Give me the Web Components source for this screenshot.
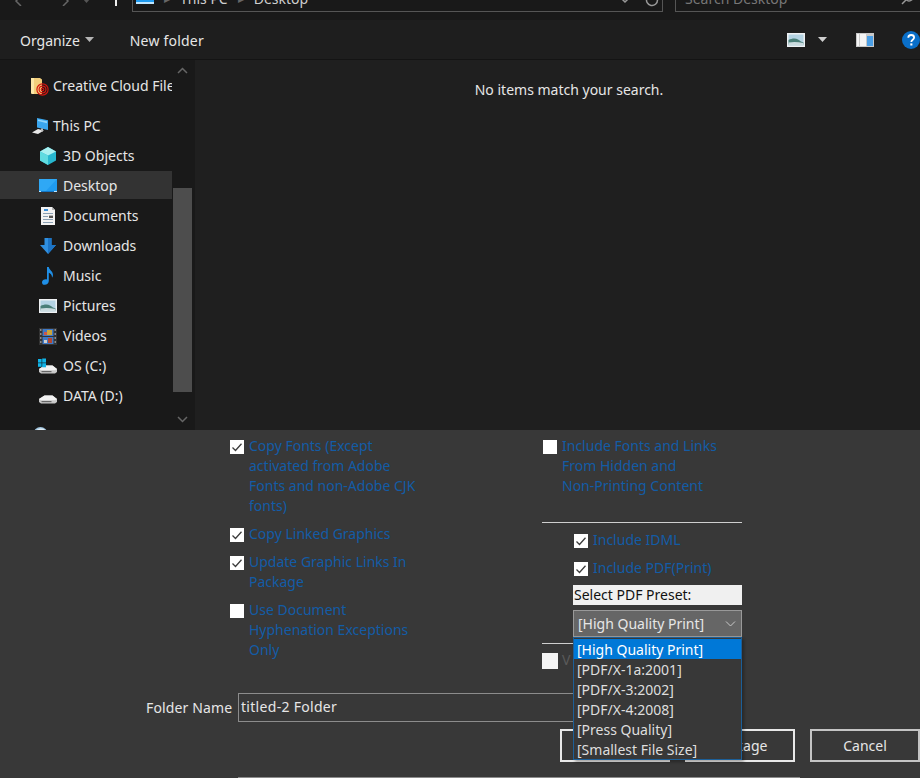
<!DOCTYPE html>
<html>
<head>
<meta charset="utf-8">
<style>
  html, body { margin: 0; padding: 0; background: #383838; }
  body { font: 14px/20px "Noto Sans", "Open Sans", sans-serif; color: #e6e6e6; width: 920px; height: 778px; overflow: hidden; }
</style>
</head>
<body>
<save-dialog>
  <title-strip></title-strip>
  <tool-strip></tool-strip>
  <div class="browser" slot="browser">
    <nav-tree>
      <nav-item icon="cc" group>Creative Cloud Files</nav-item>
      <nav-item icon="pc" group>This PC</nav-item>
      <nav-item icon="cube">3D Objects</nav-item>
      <nav-item icon="desktop" selected>Desktop</nav-item>
      <nav-item icon="doc">Documents</nav-item>
      <nav-item icon="down">Downloads</nav-item>
      <nav-item icon="music">Music</nav-item>
      <nav-item icon="pic">Pictures</nav-item>
      <nav-item icon="video">Videos</nav-item>
      <nav-item icon="osdrive">OS (C:)</nav-item>
      <nav-item icon="drive">DATA (D:)</nav-item>
      <nav-item icon="globe" group></nav-item>
    </nav-tree>
    <file-pane>No items match your search.</file-pane>
  </div>
  <package-panel>
    <option-col slot="left">
      <check-row checked>Copy Fonts (Except<br>activated from Adobe<br>Fonts and non-Adobe CJK<br>fonts)</check-row>
      <check-row checked>Copy Linked Graphics</check-row>
      <check-row checked>Update Graphic Links In<br>Package</check-row>
      <check-row>Use Document<br>Hyphenation Exceptions<br>Only</check-row>
    </option-col>
    <option-col slot="right">
      <check-row style="margin-left:1px">Include Fonts and Links<br>From Hidden and<br>Non-Printing Content</check-row>
      <rule-line style="margin-top:26px"></rule-line>
      <check-row checked style="margin:7px 0 0 32px">Include IDML</check-row>
      <check-row checked style="margin:8px 0 0 32px">Include PDF(Print)</check-row>
      <preset-select label="Select PDF Preset:" value="[High Quality Print]"></preset-select>
      <rule-line style="margin-top:6px"></rule-line>
      <check-row disabled style="margin-top:6px">V</check-row>
    </option-col>
    <folder-field slot="folder" label="Folder Name" value="titled-2 Folder"></folder-field>
    <dlg-button slot="buttons"></dlg-button>
    <dlg-button slot="buttons">Package</dlg-button>
    <dlg-button slot="buttons">Cancel</dlg-button>
  </package-panel>
</save-dialog>

<script>
(function() {
  // icons are all drawn on an 18x18 box
  const drive = `
    <path d="M0 12 5.500 8.500h8L18 12v3l-2 1.500H2L0 15z" fill="#c9c9c9"/>
    <path d="M0 12 5.500 8.500h8L18 12l-2 1.300H2z" fill="#f2f2f2"/>
    <rect x="2.500" y="14" width="10" height="1.200" fill="#666"/>`;
  const ICONS = {
    cc: `<path d="M0 1h9l2 1.500V17H1l-1-1z" fill="#f2cf7c"/><path d="M0 1h3v16H1l-1-1z" fill="#fbe7a8"/>
      <g fill="none" stroke="#d3160f" stroke-width="1.200"><circle cx="11.500" cy="12.500" r="5.600"/><circle cx="11.500" cy="12.500" r="3.400"/><circle cx="11.500" cy="12.500" r="1.300"/></g>`,
    pc: `<path d="M6 1l11 2.200V13L6 10.500z" fill="#3aa6ee"/><path d="M7 2.400 16 4.200v2L7 4z" fill="#8fd4fb"/>
      <path d="M1 15.500 7 12l6 1.500-6 3.500z" fill="#e8e8e8"/><path d="M10 11.500h2v3h-2z" fill="#bdbdbd"/>`,
    cube: `<path d="M9 0l8 4.400v9.200L9 18 1 13.600V4.400z" fill="#27b7cf"/><path d="M9 0l8 4.400L9 8.600 1 4.400z" fill="#a9f0f0"/>
      <path d="M1 4.400 9 8.600V18l-8-4.400z" fill="#5fdbe0"/>`,
    desktop: `<rect x="0" y="2" width="18" height="13" fill="#1f9bf0"/><path d="M0 2h18L6 15H0z" fill="#2fa8f5"/>
      <rect x="0" y="14" width="18" height="1" fill="#bfe6ff"/><rect x="2" y="14" width="13" height="1" fill="#1478c8"/>`,
    doc: `<path d="M2 0h11l3 3v15H2z" fill="#f3f3f3"/><path d="M13 0l3 3h-3z" fill="#b5b5b5"/>
      <g fill="#8aa0b4"><rect x="4" y="6" width="10" height="1"/><rect x="4" y="9" width="5" height="1"/><rect x="4" y="12" width="10" height="1"/><rect x="4" y="15" width="10" height="1"/></g>
      <rect x="5" y="2" width="4" height="2" fill="#3b8fd8"/><rect x="10" y="8.600" width="4" height="2.400" fill="#555"/>`,
    down: `<path d="M5.500 1h7v7H17l-8 9-8-9h4.500z" fill="#2f8fe0"/><path d="M9 1h3.500v7H17l-8 9z" fill="#1c74c6"/>`,
    music: `<path d="M8 0h1.800c.3 3 4.200 4 4.200 8 0 1-.4 2-1 2.800.3-3-2-4.500-3.200-5V14c0 2.200-2 3.800-4 3.800S3 16.800 3 15.200c0-2 2.500-3.400 5-2.800z" fill="#1f8fe6"/>`,
    pic: `<rect x="0" y="2" width="18" height="14" fill="#eef1f3"/><rect x="1.500" y="3.500" width="15" height="11" fill="#b4d3e3"/>
      <path d="M1.500 9c3-1.500 7-2 9.500-.5s3.500 2.500 5.500 3v2h-15z" fill="#4a7f78"/><path d="M1.500 11.500c5-1 10-.5 15 .5v2.500h-15z" fill="#cbdbdf"/>`,
    video: `<rect x="0" y="1" width="18" height="17" fill="#333"/>
      <rect x="3.500" y="2" width="11" height="7" fill="#3f79c6"/><rect x="3.500" y="10" width="11" height="7" fill="#3f79c6"/>
      <rect x="8" y="3" width="5" height="5" fill="#c9a33a"/><rect x="9" y="11" width="4" height="5" fill="#b3472f"/><rect x="5" y="5" width="3" height="3" fill="#c9574c"/><rect x="5" y="13" width="3" height="3" fill="#cfcfcf"/>
      <g fill="#8a8a8a"><rect x="1" y="2" width="1.500" height="2"/><rect x="1" y="6" width="1.500" height="2"/><rect x="1" y="10" width="1.500" height="2"/><rect x="1" y="14" width="1.500" height="2"/><rect x="15.500" y="2" width="1.500" height="2"/><rect x="15.500" y="6" width="1.500" height="2"/><rect x="15.500" y="10" width="1.500" height="2"/><rect x="15.500" y="14" width="1.500" height="2"/></g>`,
    osdrive: `${drive}<g fill="#10b4e8"><rect x="-1" y="2" width="3.600" height="3.600"/><rect x="3.200" y="1.500" width="3.800" height="4.100"/><rect x="-1" y="6.200" width="3.600" height="3.600"/><rect x="3.200" y="6.200" width="3.800" height="4.100"/></g>`,
    drive: drive,
    globe: `<circle cx="9.500" cy="7" r="7" fill="#9ec3dd"/><path d="M5 3.500c2-2 6-3 9-.5l-4 2z" fill="#e3eef5"/>`
  };

  const itemTemplate = document.createElement("template");
  itemTemplate.innerHTML = `
    <style>
      :host { display: flex; flex: none; align-items: center; height: 28px; box-sizing: border-box; margin-top: 2px; padding-left: 39px; white-space: nowrap; overflow: hidden; color: #e6e6e6; }
      :host([group]) { margin-top: 12px; padding-left: 31px; }
      :host([selected]) { background: #333; margin: 1px 0; padding-top: 2px; }
      svg { flex: none; width: 18px; height: 18px; margin-right: 6px; overflow: visible; }
      :host([group]) svg { margin-right: 4px; }
      :host([selected]) svg { margin-top: -1px; }
    </style>
    <svg viewBox="0 0 18 18"></svg><slot></slot>
  `;
  class NavItem extends HTMLElement {
    constructor() {
      super();
      this.attachShadow({ mode: "open" });
      this.shadowRoot.appendChild(itemTemplate.content.cloneNode(true));
    }
    connectedCallback() {
      this.shadowRoot.querySelector("svg").innerHTML = ICONS[this.getAttribute("icon")] || "";
    }
  }

  const treeTemplate = document.createElement("template");
  treeTemplate.innerHTML = `
    <style>
      :host { display: flex; flex: none; width: 195px; background: #191919; overflow: hidden; }
      .list { width: 172px; flex: none; display: flex; flex-direction: column; }
      .bar { width: 19px; margin: 0 2px 0 1px; flex: none; display: flex; flex-direction: column; align-items: center; height: 371px; }
      .thumb { width: 19px; height: 204px; background: #4d4d4d; margin-top: 114px; flex: none; }
      svg { width: 11px; height: 7px; margin-top: 7px; flex: none; }
      svg.dn { margin-top: 24px; }
    </style>
    <div class="list"><slot></slot></div>
    <div class="bar">
      <svg viewBox="0 0 11 7"><path d="M1 6l4.500-4.500L10 6" fill="none" stroke="#666" stroke-width="1.500"/></svg>
      <div class="thumb"></div>
      <svg class="dn" viewBox="0 0 11 7"><path d="M1 1l4.500 4.500L10 1" fill="none" stroke="#666" stroke-width="1.500"/></svg>
    </div>
  `;
  class NavTree extends HTMLElement {
    constructor() {
      super();
      this.attachShadow({ mode: "open" });
      this.shadowRoot.appendChild(treeTemplate.content.cloneNode(true));
    }
  }

  const paneTemplate = document.createElement("template");
  paneTemplate.innerHTML = `
    <style>
      :host { display: block; flex: 1; background: #1f1f1f; color: #e6e6e6; text-align: center; padding: 20px 0 0 23px; }
    </style>
    <slot></slot>
  `;
  class FilePane extends HTMLElement {
    constructor() {
      super();
      this.attachShadow({ mode: "open" });
      this.shadowRoot.appendChild(paneTemplate.content.cloneNode(true));
    }
  }

  const titleTemplate = document.createElement("template");
  titleTemplate.innerHTML = `
    <style>
      :host { display: flex; align-items: flex-end; height: 20px; padding-bottom: 8px; box-sizing: border-box; overflow: hidden; background: #191919; color: #b8b8b8; }
      .nav { display: flex; align-items: flex-end; width: 132px; height: 12px; flex: none; }
      .nav svg { flex: none; }
      .tick { width: 2px; height: 6px; background: #eee; align-self: flex-start; margin-left: 24px; }
      .box { display: flex; align-items: flex-end; height: 28px; border: 1px solid #555; box-sizing: border-box; flex: none; padding-bottom: 2px; }
      .addr { width: 531px; padding-left: 3px; margin-right: 12px; }
      .search { width: 260px; padding-left: 9px; color: #777; }
      .sep { margin: 0 10px; color: #666; font-size: 8px; line-height: 20px; }
      .path { color: #cfcfcf; }
      .push { flex: 1; }
    </style>
    <div class="nav">
      <svg style="margin:0 0 6px 14px" width="9" height="8" viewBox="0 0 9 8"><path d="M7 -2 2 3l5 5" fill="none" stroke="#666" stroke-width="1.500"/></svg>
      <svg style="margin:0 0 6px 38px" width="9" height="8" viewBox="0 0 9 8"><path d="M2 -2l5 5-5 5" fill="none" stroke="#666" stroke-width="1.500"/></svg>
      <svg style="margin:0 0 8px 12px" width="9" height="5" viewBox="0 0 9 5"><path d="M1 0h7L4.500 4z" fill="#555"/></svg>
      <div class="tick"></div>
    </div>
    <div class="box addr">
      <svg width="18" height="14" viewBox="0 0 18 14" style="margin-bottom:5px"><rect width="18" height="14" fill="#1f9bf0"/><rect y="12" width="18" height="2" fill="#bfe6ff"/></svg>
      <span class="sep">&#9654;</span><span class="path">This PC</span><span class="sep">&#9654;</span><span class="path">Desktop</span>
      <span class="push"></span>
      <svg width="10" height="6" viewBox="0 0 10 6" style="margin-bottom:5px"><path d="M1 0l4 4 4-4" fill="none" stroke="#999" stroke-width="1.500"/></svg>
      <svg width="16" height="16" viewBox="0 0 16 16" style="margin:0 2px 1px 14px"><path d="M13.500 8A5.500 5.500 0 1 1 11 3.400" fill="none" stroke="#999" stroke-width="1.500"/></svg>
    </div>
    <div class="box search">
      <span>Search Desktop</span>
      <span class="push"></span>
      <svg width="14" height="14" viewBox="0 0 14 14" style="margin:0 20px 3px 0"><circle cx="9" cy="5" r="4" fill="none" stroke="#999" stroke-width="1.500"/><path d="M6 8l-4 4" stroke="#999" stroke-width="1.500"/></svg>
    </div>
  `;
  class TitleStrip extends HTMLElement {
    constructor() {
      super();
      this.attachShadow({ mode: "open" });
      this.shadowRoot.appendChild(titleTemplate.content.cloneNode(true));
    }
  }

  const toolTemplate = document.createElement("template");
  toolTemplate.innerHTML = `
    <style>
      :host { display: flex; align-items: center; height: 40px; padding-left: 20px; box-sizing: border-box; background: #1e1e1e; border-bottom: 1px solid #141414; color: #e6e6e6; overflow: hidden; }
      span { margin-top: 2px; }
      .push { flex: 1; }
      svg { flex: none; }
    </style>
    <span>Organize</span>
    <svg style="margin:0 0 0 5px" width="9" height="5" viewBox="0 0 9 5"><path d="M0 0h9L4.500 5z" fill="#b5b5b5"/></svg>
    <span style="margin-left:36px;letter-spacing:.2px">New folder</span>
    <span class="push"></span>
    <svg width="18" height="14" viewBox="0 0 18 14"><rect width="18" height="14" fill="#eef1f3"/><rect x="1.500" y="1.500" width="15" height="11" fill="#b4d3e3"/><path d="M1.500 7c3-1.500 7-2 9.500-.5s3.500 2.500 5.500 3v2h-15z" fill="#4a7f78"/><path d="M1.500 9.500c5-1 10-.5 15 .5v2.500h-15z" fill="#cbdbdf"/></svg>
    <svg style="margin:0 0 0 13px" width="9" height="5" viewBox="0 0 9 5"><path d="M0 0h9L4.500 5z" fill="#cfcfcf"/></svg>
    <svg style="margin:0 0 0 29px" width="18" height="14" viewBox="0 0 18 14"><rect width="18" height="14" fill="#c9c9c9"/><rect x="4" y="1" width="6" height="12" fill="#f5f5f5"/><rect x="1" y="1" width="2" height="12" fill="#f5f5f5"/><rect x="11" y="3" width="6" height="10" fill="#4b9fe6"/></svg>
    <svg style="margin:0 0 0 28px" width="18" height="18" viewBox="0 0 18 18"><circle cx="9" cy="9" r="9" fill="#0a6fc9"/><path d="M6.300 6.800c0-1.800 1.200-2.800 2.900-2.800s2.900 1 2.900 2.500c0 2.300-2.800 2.300-2.800 4.600" fill="none" stroke="#fff" stroke-width="1.800"/><rect x="8.300" y="12.400" width="2.100" height="2.100" fill="#fff"/></svg>
  `;
  class ToolStrip extends HTMLElement {
    constructor() {
      super();
      this.attachShadow({ mode: "open" });
      this.shadowRoot.appendChild(toolTemplate.content.cloneNode(true));
    }
  }

  const checkTemplate = document.createElement("template");
  checkTemplate.innerHTML = `
    <style>
      :host { display: flex; align-items: flex-start; color: #135ca6; }
      .box { flex: none; width: 14px; height: 14px; margin: 4px 5px 0 0; background: #fff; display: flex; }
      svg { display: none; width: 14px; height: 14px; }
      :host([checked]) svg { display: block; }
      :host([disabled]) { color: #5a5a5a; }
      :host([disabled]) .box { width: 16px; height: 16px; margin: 3px 4px 0 0; background: #f4f4f4; }
      .text { white-space: nowrap; }
    </style>
    <span class="box"><svg viewBox="0 0 14 14"><path d="M2.500 7.500 5.500 10.500 11.500 3.800" fill="none" stroke="#3c3c3c" stroke-width="1.300"/></svg></span>
    <span class="text"><slot></slot></span>
  `;
  class CheckRow extends HTMLElement {
    constructor() {
      super();
      this.attachShadow({ mode: "open" });
      this.shadowRoot.appendChild(checkTemplate.content.cloneNode(true));
    }
  }

  const colTemplate = document.createElement("template");
  colTemplate.innerHTML = `
    <style>
      :host { display: flex; flex-direction: column; gap: 8px; }
      :host([slot="right"]) { gap: 0; width: 200px; }
    </style>
    <slot></slot>
  `;
  class OptionCol extends HTMLElement {
    constructor() {
      super();
      this.attachShadow({ mode: "open" });
      this.shadowRoot.appendChild(colTemplate.content.cloneNode(true));
    }
  }

  class RuleLine extends HTMLElement {
    constructor() {
      super();
      this.attachShadow({ mode: "open" });
      this.shadowRoot.innerHTML = `<style>:host { display: block; height: 1px; flex: none; background: #cfcfcf; }</style>`;
    }
  }

  const presetTemplate = document.createElement("template");
  presetTemplate.innerHTML = `
    <style>
      :host { display: block; position: relative; margin: 7px 0 0 31px; width: 169px; }
      .label { background: #f0f0f0; color: #111; height: 20px; line-height: 20px; padding-left: 1px; margin-bottom: 5px; }
      .field { display: flex; align-items: center; justify-content: space-between; height: 27px; box-sizing: border-box; background: #666; border: 1px solid #999; padding: 0 5px 0 4px; color: #e6e6e6; }
      .menu { position: absolute; left: 0; top: 52px; width: 169px; box-sizing: border-box; background: #383838; border: 1px solid #1c5f98; padding: 1px 0 0; box-shadow: 2px 2px 3px rgba(0,0,0,.3); z-index: 5; color: #dedede; }
      .menu div { height: 20px; line-height: 22px; padding-left: 3px; white-space: nowrap; }
      .menu .on { background: #0078d7; color: #fff; }
    </style>
    <div class="label"></div>
    <div class="field"><span class="val"></span><svg width="11" height="6" viewBox="0 0 11 6"><path d="M1 .5l4.500 4.500L10 .5" fill="none" stroke="#c8c8c8"/></svg></div>
    <div class="menu"></div>
  `;
  const PRESETS = ["[High Quality Print]", "[PDF/X-1a:2001]", "[PDF/X-3:2002]", "[PDF/X-4:2008]", "[Press Quality]", "[Smallest File Size]"];
  class PresetSelect extends HTMLElement {
    constructor() {
      super();
      this.attachShadow({ mode: "open" });
      this.shadowRoot.appendChild(presetTemplate.content.cloneNode(true));
    }
    connectedCallback() {
      const value = this.getAttribute("value");
      this.shadowRoot.querySelector(".label").textContent = this.getAttribute("label");
      this.shadowRoot.querySelector(".val").textContent = value;
      const menu = this.shadowRoot.querySelector(".menu");
      PRESETS.forEach(name => {
        const row = document.createElement("div");
        row.textContent = name;
        if (name === value) row.className = "on";
        menu.appendChild(row);
      });
    }
  }

  const folderTemplate = document.createElement("template");
  folderTemplate.innerHTML = `
    <style>
      :host { display: flex; align-items: center; }
      .label { width: 92px; flex: none; letter-spacing: .15px; }
      .input { width: 420px; height: 29px; box-sizing: border-box; border: 1px solid #8c8c8c; padding: 3px 0 0 2px; color: #e6e6e6; letter-spacing: .3px; }
    </style>
    <span class="label"></span><div class="input"></div>
  `;
  class FolderField extends HTMLElement {
    constructor() {
      super();
      this.attachShadow({ mode: "open" });
      this.shadowRoot.appendChild(folderTemplate.content.cloneNode(true));
    }
    connectedCallback() {
      this.shadowRoot.querySelector(".label").textContent = this.getAttribute("label");
      this.shadowRoot.querySelector(".input").textContent = this.getAttribute("value");
    }
  }

  const buttonTemplate = document.createElement("template");
  buttonTemplate.innerHTML = `
    <style>
      :host { display: flex; align-items: center; justify-content: center; width: 110px; height: 33px; box-sizing: border-box; border: 2px solid #e8e8e8; color: #e6e6e6; }
      :host(:last-child) { border-color: #c4c4c4; }
    </style>
    <slot></slot>
  `;
  class DlgButton extends HTMLElement {
    constructor() {
      super();
      this.attachShadow({ mode: "open" });
      this.shadowRoot.appendChild(buttonTemplate.content.cloneNode(true));
    }
  }

  const panelTemplate = document.createElement("template");
  panelTemplate.innerHTML = `
    <style>
      :host { display: flex; flex-direction: column; flex: 1; background: #383838; }
      .cols { display: grid; grid-template-columns: 312px 200px; padding: 6px 0 0 230px; height: 257px; }
      .folder { padding-left: 146px; }
      .buttons { display: flex; gap: 15px; padding: 7px 0 0 560px; }
      .strip { height: 1px; margin: 15px 120px 0 238px; background: #8c8c8c; }
    </style>
    <div class="cols"><slot name="left"></slot><slot name="right"></slot></div>
    <div class="folder"><slot name="folder"></slot></div>
    <div class="buttons"><slot name="buttons"></slot></div>
    <div class="strip"></div>
  `;
  class PackagePanel extends HTMLElement {
    constructor() {
      super();
      this.attachShadow({ mode: "open" });
      this.shadowRoot.appendChild(panelTemplate.content.cloneNode(true));
    }
  }

  const dialogTemplate = document.createElement("template");
  dialogTemplate.innerHTML = `
    <style>
      :host { display: flex; flex-direction: column; width: 920px; height: 778px; overflow: hidden; }
      .top { height: 430px; flex: none; display: flex; flex-direction: column; overflow: hidden; background: #191919; }
      ::slotted(.browser) { display: flex; flex: 1; min-height: 0; }
    </style>
    <div class="top">
      <slot name="title"></slot>
      <slot name="tools"></slot>
      <slot name="browser"></slot>
    </div>
    <slot name="panel"></slot>
  `;
  class SaveDialog extends HTMLElement {
    constructor() {
      super();
      this.attachShadow({ mode: "open" });
      this.shadowRoot.appendChild(dialogTemplate.content.cloneNode(true));
      this.querySelector("title-strip").slot = "title";
      this.querySelector("tool-strip").slot = "tools";
      this.querySelector("package-panel").slot = "panel";
    }
  }

  window.customElements.define("nav-item", NavItem);
  window.customElements.define("nav-tree", NavTree);
  window.customElements.define("file-pane", FilePane);
  window.customElements.define("title-strip", TitleStrip);
  window.customElements.define("tool-strip", ToolStrip);
  window.customElements.define("check-row", CheckRow);
  window.customElements.define("option-col", OptionCol);
  window.customElements.define("rule-line", RuleLine);
  window.customElements.define("preset-select", PresetSelect);
  window.customElements.define("folder-field", FolderField);
  window.customElements.define("dlg-button", DlgButton);
  window.customElements.define("package-panel", PackagePanel);
  window.customElements.define("save-dialog", SaveDialog);
})();
</script>
</body>
</html>
